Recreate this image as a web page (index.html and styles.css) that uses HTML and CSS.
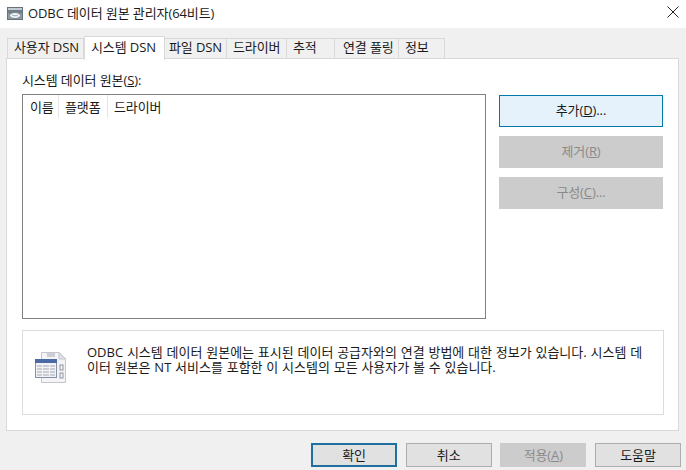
FILE: index.html
```html
<!DOCTYPE html>
<html lang="ko">
<head>
<meta charset="utf-8">
<title>ODBC 데이터 원본 관리자(64비트)</title>
<link rel="stylesheet" href="styles.css">
</head>
<body>
<div class="window">
  <header class="titlebar">
    <svg class="app-icon" width="17" height="17" viewBox="0 0 17 17">
      <rect x="0.5" y="2.500" width="15" height="12" fill="#8d9ba6" stroke="#66737d"/>
      <rect x="1" y="3" width="14" height="2" fill="#c3ccd3"/>
      <path d="M1 5h14v3c-3 1-5-1-7 0s-5 1-7 0z" fill="#6f7d88"/>
      <ellipse cx="8" cy="10.500" rx="5.500" ry="3" fill="#f1f4f5" stroke="#7b8790"/>
      <path d="M5 10c2 1 4 1 6 0" stroke="#9aa5ad" fill="none"/>
    </svg>
    <span class="title">ODBC 데이터 원본 관리자(64비트)</span>
    <svg class="close" width="12" height="12" viewBox="0 0 12 12">
      <path d="M0.5 0.5L11.500 11.500M11.500 0.5L0.5 11.500" stroke="#222" stroke-width="1" fill="none"/>
    </svg>
  </header>
  <div class="body">
    <nav class="tabs">
      <div class="tab w1">사용자 DSN</div>
      <div class="tab active w2">시스템 DSN</div>
      <div class="tab w3">파일 DSN</div>
      <div class="tab w4">드라이버</div>
      <div class="tab w5">추적</div>
      <div class="tab w6">연결 풀링</div>
      <div class="tab w7">정보</div>
    </nav>
    <main class="panel">
      <div class="top">
        <div class="left">
          <label class="list-label">시스템 데이터 원본(<u>S</u>):</label>
          <div class="listbox">
            <div class="list-head">
              <div class="col c1">이름</div>
              <div class="col c2">플랫폼</div>
              <div class="col c3">드라이버</div>
            </div>
          </div>
        </div>
        <div class="side">
          <button class="btn focus-soft">추가(<u>D</u>)...</button>
          <button class="btn disabled">제거(<u>R</u>)</button>
          <button class="btn disabled">구성(<u>C</u>)...</button>
        </div>
      </div>
      <section class="info">
        <svg class="info-icon" width="32" height="32" viewBox="0 0 32 32">
          <path d="M6.500 1.500H24L30.500 8V31.500H6.500z" fill="#f4f4f6" stroke="#c4c6cc"/>
          <path d="M24 1.500V8H30.500z" fill="#dfe1e6" stroke="#c4c6cc"/>
          <path d="M12 3h8M12 5h8" stroke="#a4a8b0"/>
          <rect x="25" y="14" width="3" height="5" fill="none" stroke="#8f939b"/>
          <rect x="25" y="22" width="3" height="5" fill="none" stroke="#8f939b"/>
          <rect x="0.500" y="8.500" width="21" height="18" fill="#f2f3f6" stroke="#8490a8"/>
          <rect x="0" y="8" width="22" height="4" fill="#4a6aa5"/>
          <path d="M2 15h18M2 18h18M2 21h18M2 24h18" stroke="#a3a7b0"/>
          <path d="M7.500 13v12M14.500 13v12" stroke="#f2f3f6"/>
        </svg>
        <p class="info-text">ODBC 시스템 데이터 원본에는 표시된 데이터 공급자와의 연결 방법에 대한 정보가 있습니다. 시스템 데이터 원본은 NT 서비스를 포함한 이 시스템의 모든 사용자가 볼 수 있습니다.</p>
      </section>
    </main>
    <footer class="actions">
      <button class="btn foot default">확인</button>
      <button class="btn foot">취소</button>
      <button class="btn foot disabled">적용(<u>A</u>)</button>
      <button class="btn foot">도움말</button>
    </footer>
  </div>
</div>
</body>
</html>
```
FILE: styles.css
```css
* { box-sizing: border-box; }
html, body { margin: 0; padding: 0; }
body {
  width: 686px;
  height: 470px;
  overflow: hidden;
  font-family: "Open Sans", "Noto Sans CJK KR", sans-serif;
  font-size: 13px;
  letter-spacing: -0.1px;
  color: #1a1a1a;
  background: #f0f0f0;
}
.window { display: flex; flex-direction: column; height: 470px; }
.titlebar {
  height: 28px;
  background: #fff;
  display: flex;
  align-items: center;
  padding: 0 7px;
  flex: none;
}
.app-icon { margin-right: 4px; flex: none; position: relative; top: -1px; }
.title { flex: 1; position: relative; top: -2px; }
.close { flex: none; position: relative; top: -2px; }
.body { flex: 1; padding: 10px 5px 0 6px; display: flex; flex-direction: column; }
.tabs { display: flex; height: 20px; padding-left: 1px; position: relative; z-index: 1; }
.tab {
  height: 21px;
  background: #f0f0f0;
  border: 1px solid #d9d9d9;
  border-left: 0;
  padding-left: 7px;
  line-height: 17px;
  white-space: nowrap;
}
.tab.active {
  height: 24px;
  margin-top: -2px;
  background: #fff;
  border-bottom: 0;
  border-left: 1px solid #d9d9d9;
  line-height: 20px;
  padding-left: 6px;
}
.w1 { width: 77px; border-left: 1px solid #d9d9d9; padding-left: 6px; }
.w2 { width: 81px; }
.w3 { width: 62px; padding-left: 4px; }
.w4 { width: 60px; padding-left: 6px; }
.w5 { width: 48px; padding-left: 6px; }
.w6 { width: 64px; padding-left: 8px; }
.w7 { width: 46px; padding-left: 6px; }
.panel {
  height: 373px;
  width: 673px;
  background: #fff;
  border: 1px solid #d9d9d9;
  padding: 14px 14px 0 15px;
}
.top { display: flex; }
.left { width: 464px; }
.list-label { display: block; height: 21px; line-height: 15px; }
.listbox { height: 225px; border: 1px solid #828282; background: #fff; }
.list-head { display: flex; height: 23px; }
.col { border-right: 1px solid #e5e5e5; padding-left: 7px; line-height: 24px; height: 23px; white-space: nowrap; }
.c1 { width: 36px; }
.c2 { width: 49px; padding-left: 6px; }
.c3 { flex: 1; border-right: 0; padding-left: 6px; }
.side { margin-left: 13px; padding-top: 22px; display: flex; flex-direction: column; gap: 9px; }
.btn {
  width: 164px;
  height: 32px;
  background: #e1e1e1;
  border: 1px solid #adadad;
  padding: 0 0 3px;
  font: inherit;
  letter-spacing: inherit;
  color: #1a1a1a;
  display: block;
}
.focus-soft { background: #e5f1fb; border-color: #0078a8; }
.disabled { background: #cccccc; border-color: #cccccc; color: #8a8a8a; }
.info {
  width: 642px;
  height: 85px;
  margin-top: 11px;
  border: 1px solid #dcdcdc;
  padding: 14px 14px 0 12px;
  display: flex;
}
.info-icon { flex: none; margin-top: 6px; }
.info-text { margin: 0 0 0 20px; line-height: 15px; letter-spacing: 0; word-spacing: 0.4px; word-break: break-all; width: 561px; }
.actions { display: flex; gap: 8.67px; padding: 12px 0 0 305px; }
.foot { width: 86px; height: 24px; flex: none; padding: 0 0 1px; }
.default { border: 2px solid #1f6f9f; }
```
